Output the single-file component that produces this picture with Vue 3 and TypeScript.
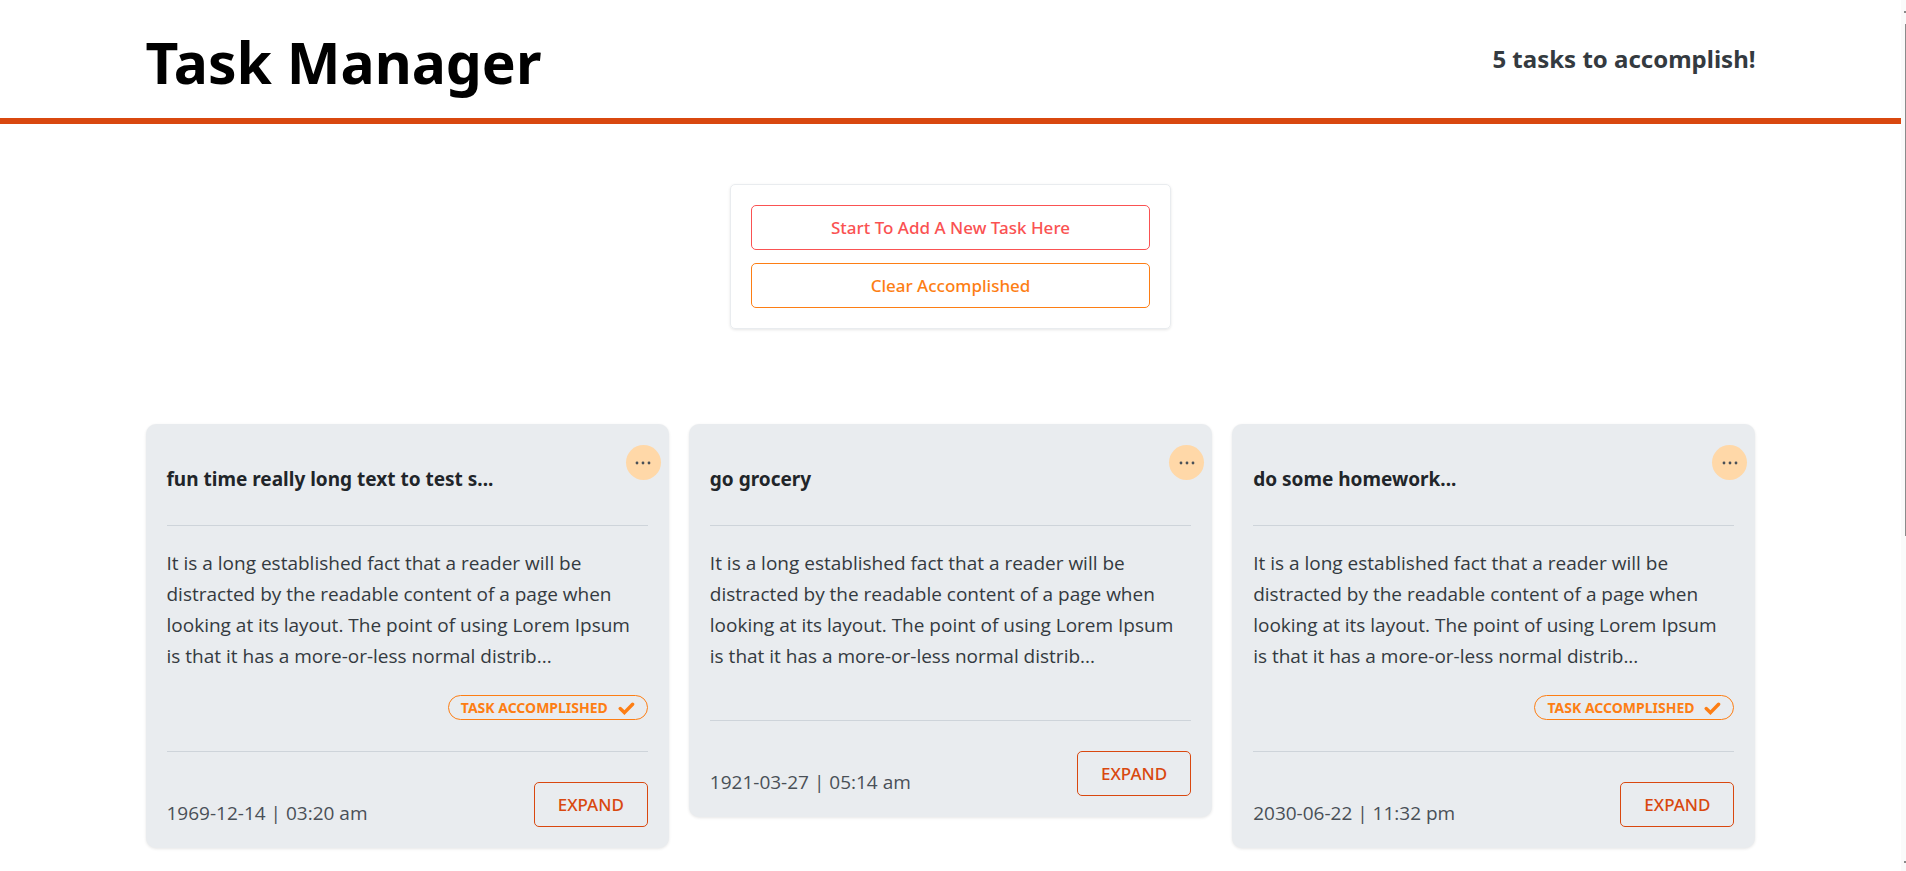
<script setup lang="ts">
interface Task {
  id: number
  title: string
  due: string
  done: boolean
}

const excerpt: string =
  'It is a long established fact that a reader will be distracted by the readable content of a page when looking at its layout. The point of using Lorem Ipsum is that it has a more-or-less normal distrib...'

const tasks: Task[] = [
  { id: 1, title: 'fun time really long text to test s...', due: '1969-12-14 | 03:20 am', done: true },
  { id: 2, title: 'go grocery', due: '1921-03-27 | 05:14 am', done: false },
  { id: 3, title: 'do some homework...', due: '2030-06-22 | 11:32 pm', done: true },
]
</script>

<template>
  <div class="app">
    <div class="page">
      <header class="header">
        <div class="container header-row">
          <h1 class="brand">Task Manager</h1>
          <p class="count">5 tasks to accomplish!</p>
        </div>
      </header>
      <main>
        <section class="panel">
          <button type="button" class="btn btn-red">Start To Add A New Task Here</button>
          <button type="button" class="btn btn-orange">Clear Accomplished</button>
        </section>
        <section class="container cards">
          <article v-for="task in tasks" :key="task.id" class="card">
            <button type="button" class="menu" aria-label="Task options">
              <svg viewBox="0 0 18 18" width="18" height="18" aria-hidden="true">
                <circle cx="3" cy="9" r="1.4" />
                <circle cx="9" cy="9" r="1.4" />
                <circle cx="15" cy="9" r="1.4" />
              </svg>
            </button>
            <h2 class="title">{{ task.title }}</h2>
            <div class="body">
              <p class="text">{{ excerpt }}</p>
              <span v-if="task.done" class="badge">
                Task accomplished
                <svg viewBox="0 0 17 13" width="17" height="13" aria-hidden="true">
                  <path d="M2.2 6.6 6.4 10.6 14.6 2.2" />
                </svg>
              </span>
            </div>
            <footer class="foot">
              <time class="due">{{ task.due }}</time>
              <button type="button" class="btn btn-expand">EXPAND</button>
            </footer>
          </article>
        </section>
      </main>
    </div>
    <div class="rail" aria-hidden="true">
      <span class="tip"></span>
      <div class="track"><div class="thumb"></div></div>
      <span class="tip"></span>
    </div>
  </div>
</template>

<style>
body {
  margin: 0;
  background: #fff;
}
</style>

<style scoped>
.app {
  display: flex;
  min-height: 100vh;
  font-family: "Segoe UI", "Noto Sans", "Open Sans", sans-serif;
  color: #212529;
}
.page {
  flex: 1;
  min-width: 0;
}
.container {
  box-sizing: border-box;
  width: 100%;
  max-width: 1650px;
  margin: 0 auto;
  padding: 0 20px;
}
.header {
  border-bottom: 6px solid #d9480f;
}
.header-row {
  display: flex;
  justify-content: space-between;
  align-items: center;
  height: 118px;
}
.brand {
  margin: 0;
  padding-top: 5px;
  font-size: 57px;
  line-height: 80px;
  font-weight: 700;
  color: #000;
}
.count {
  margin: 0;
  font-size: 24px;
  line-height: 38px;
  font-weight: 700;
  color: #343a40;
}
.panel {
  box-sizing: border-box;
  width: 441px;
  max-width: 100%;
  margin: 60px auto 95px;
  padding: 20px;
  display: flex;
  flex-direction: column;
  gap: 13px;
  border: 1px solid #e9ecef;
  border-radius: 5px;
  box-shadow: 0 1px 3px rgba(0, 0, 0, 0.1);
}
.btn {
  box-sizing: border-box;
  height: 45px;
  padding: 1px 23px 0;
  border: 1px solid currentColor;
  border-radius: 5px;
  background: transparent;
  font-family: inherit;
  font-size: 17px;
  line-height: 24px;
  font-weight: 500;
}
.btn-red {
  color: #fa5252;
}
.btn-orange {
  color: #fd7e14;
}
.btn-expand {
  color: #d9480f;
}
.cards {
  display: grid;
  grid-template-columns: repeat(3, minmax(0, 1fr));
  align-items: start;
  gap: 20px;
}
.card {
  position: relative;
  padding: 21px;
  border-radius: 10px;
  background: #e9ecef;
  box-shadow: 0 1px 3px rgba(0, 0, 0, 0.1);
}
.menu {
  position: absolute;
  top: 21px;
  right: 8px;
  display: flex;
  align-items: center;
  justify-content: center;
  width: 35px;
  height: 35px;
  padding: 0;
  border: 0;
  border-radius: 50%;
  background: #ffd8a8;
}
.menu svg {
  fill: #495057;
}
.title {
  margin: 0;
  padding: 18px 40px 30px 0;
  font-size: 19px;
  line-height: 32px;
  font-weight: 700;
}
.body {
  display: flex;
  flex-direction: column;
  align-items: flex-end;
  gap: 23px;
  padding: 22px 0 31px;
  border: solid #ced4da;
  border-width: 1px 0;
}
.text {
  width: 100%;
  margin: 0;
  font-family: "Segoe UI", "Open Sans", "Noto Sans", sans-serif;
  font-size: 19px;
  line-height: 31px;
  color: #343a40;
}
.text:last-child {
  padding-bottom: 17px;
}
.badge {
  box-sizing: border-box;
  display: flex;
  align-items: center;
  gap: 10px;
  height: 25px;
  padding: 1px 12px 0;
  border: 1px solid #fd7e14;
  border-radius: 13px;
  font-size: 14px;
  line-height: 20px;
  font-weight: 700;
  text-transform: uppercase;
  color: #fd7e14;
}
.badge svg {
  fill: none;
  stroke: currentColor;
  stroke-width: 3.4;
  stroke-linecap: round;
  stroke-linejoin: miter;
}
.foot {
  display: flex;
  justify-content: space-between;
  align-items: flex-end;
  padding-top: 30px;
}
.due {
  font-family: "Segoe UI", "Open Sans", "Noto Sans", sans-serif;
  font-size: 19px;
  line-height: 28px;
  color: #495057;
}
.rail {
  box-sizing: border-box;
  display: flex;
  flex-direction: column;
  align-items: flex-end;
  width: 5px;
  padding: 11px 0 8px;
  background: #fafafa;
}
.tip {
  width: 2px;
  height: 2px;
  background: #8b8b8b;
}
.track {
  flex: 1;
  width: 1px;
  padding: 11px 0;
}
.thumb {
  width: 1px;
  height: 62%;
  background: #8b8b8b;
}
</style>
